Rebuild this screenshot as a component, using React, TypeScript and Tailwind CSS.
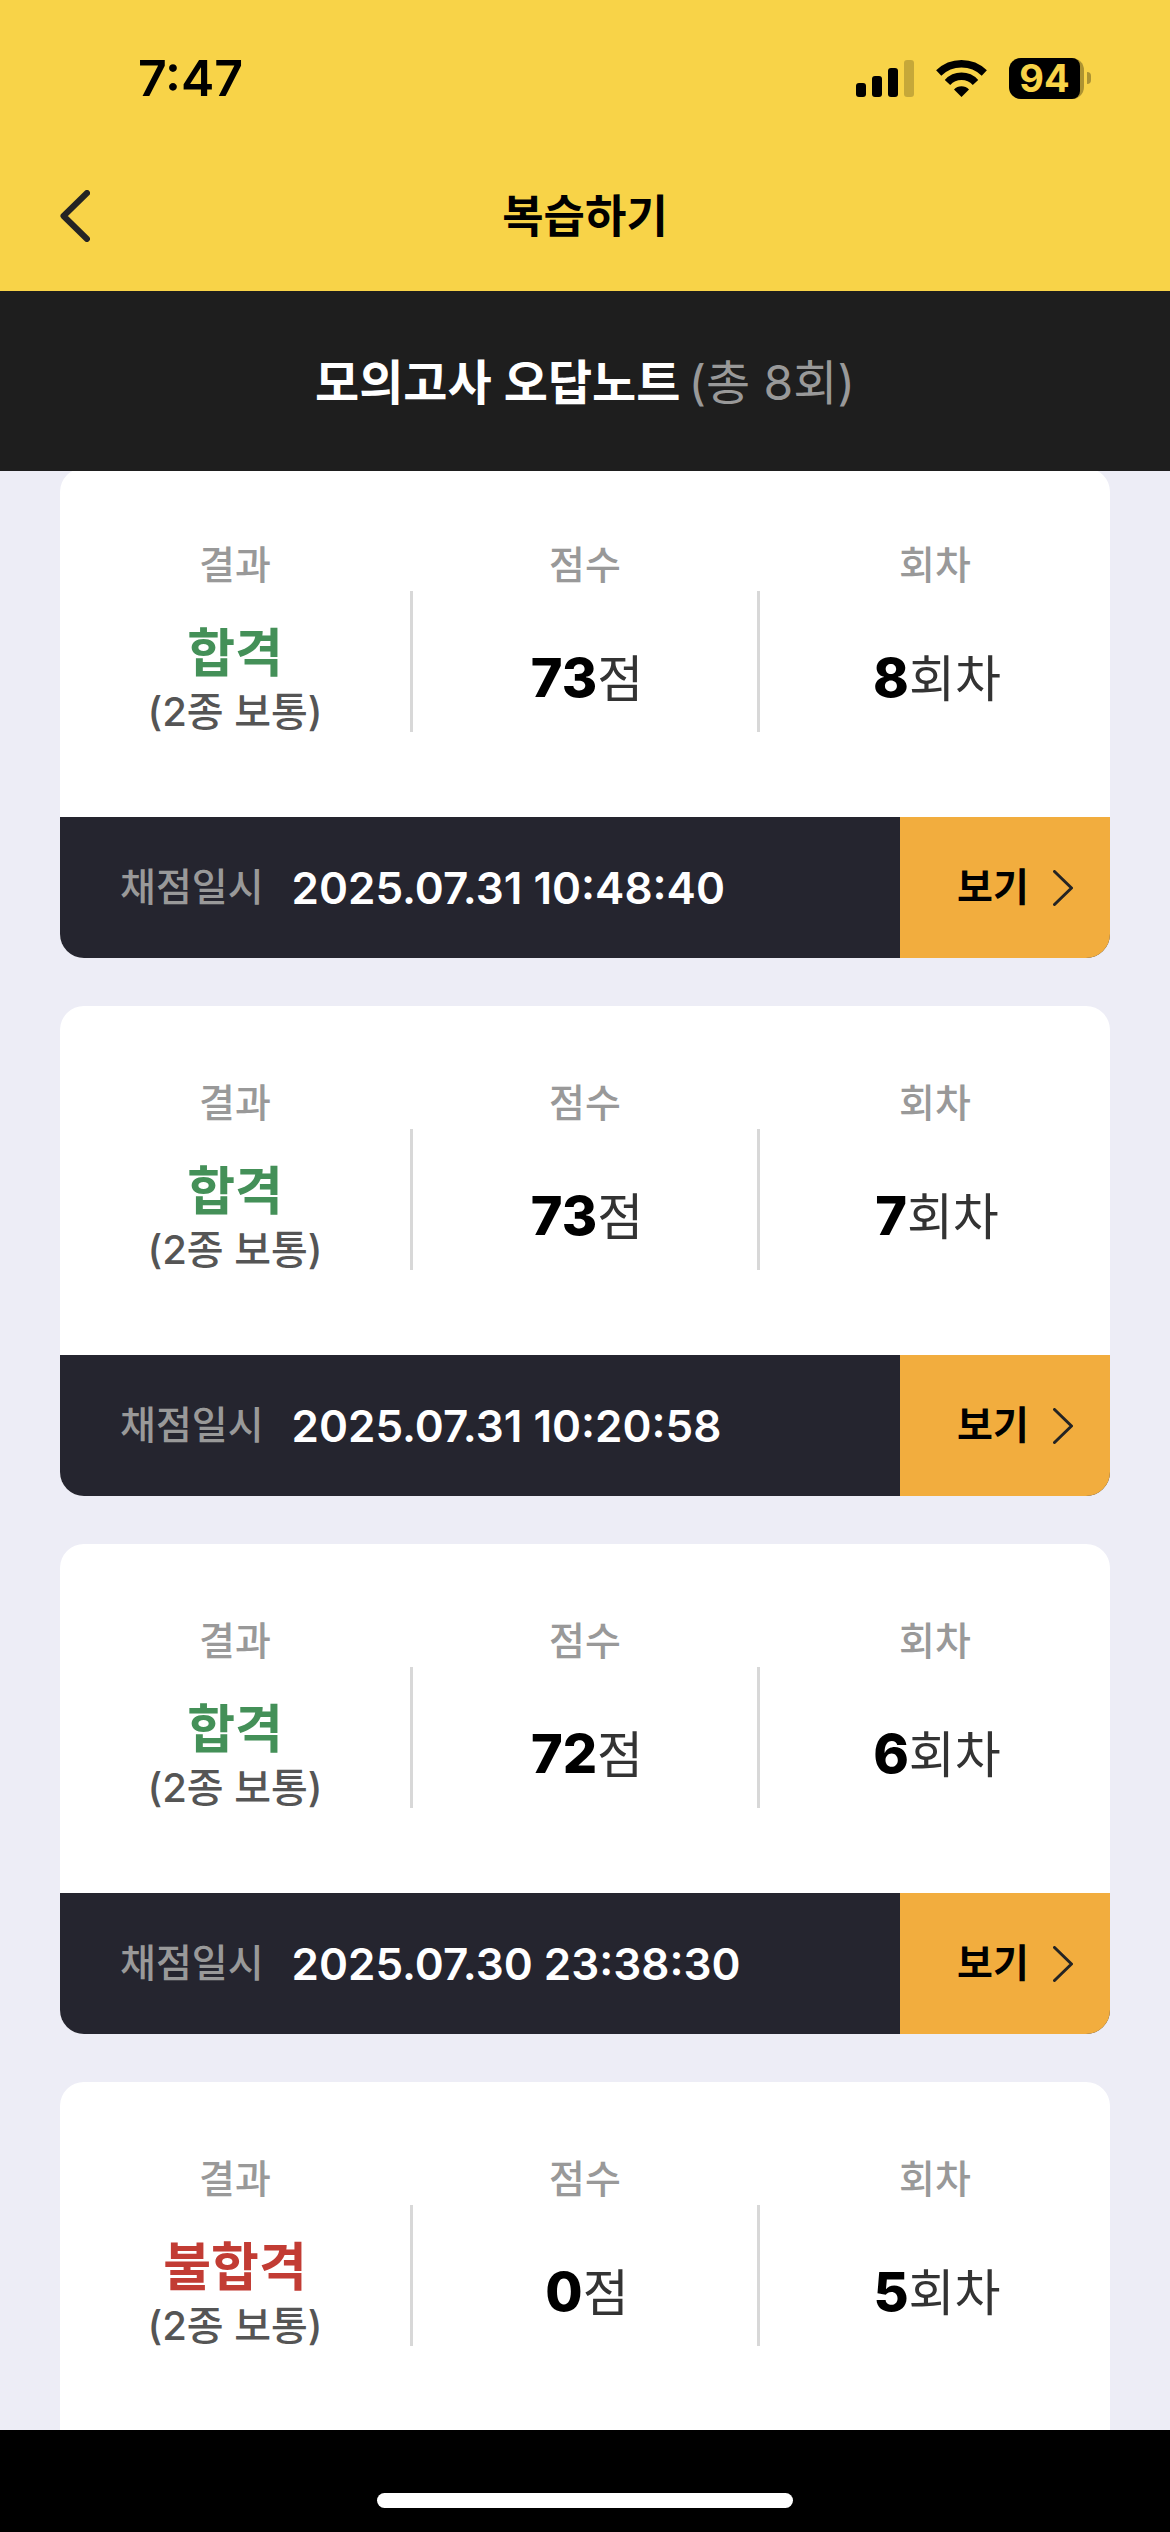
interface ExamRecord {
  round: number
  score: number
  passed: boolean
  license: string
  gradedAt?: string
}

const totalRounds = 8

const records: ExamRecord[] = [
  { round: 8, score: 73, passed: true, license: '2종 보통', gradedAt: '2025.07.31 10:48:40' },
  { round: 7, score: 73, passed: true, license: '2종 보통', gradedAt: '2025.07.31 10:20:58' },
  { round: 6, score: 72, passed: true, license: '2종 보통', gradedAt: '2025.07.30 23:38:30' },
  { round: 5, score: 0, passed: false, license: '2종 보통' },
]

function StatusBar() {
  return (
    <div className="flex items-center justify-between pt-14 pl-[138px] pr-[79px]">
      <span className="text-[50px] leading-[44px] font-semibold">7:47</span>
      <div className="flex items-center gap-[22px]">
        <svg className="w-[58px] h-[37px]" viewBox="0 0 58 37" aria-hidden="true">
          <rect x="0" y="23" width="10" height="14" rx="3" />
          <rect x="16" y="16" width="10" height="21" rx="3" />
          <rect x="32" y="8" width="10" height="29" rx="3" />
          <rect x="48" y="0" width="10" height="37" rx="3" opacity="0.2" />
        </svg>
        <svg className="w-[51px] h-[37px]" viewBox="0 0 51 37" fill="none" aria-hidden="true">
          <path d="M2.7 13A32.7 32.7 0 0 1 48.3 13" stroke="black" strokeWidth="7.4" />
          <path d="M11.5 22.4A19 19 0 0 1 39.5 22.4" stroke="black" strokeWidth="7.4" />
          <path d="M25.5 37L18 29.4A10.6 10.6 0 0 1 33 29.4Z" fill="black" />
        </svg>
        <div className="flex items-center gap-[3px]">
          <div className="flex h-[41px] w-[75px] rounded-[12px] bg-black/30">
            <span className="flex w-[71px] items-center justify-center rounded-l-[12px] rounded-r-[8px] bg-black text-[38px] leading-[41px] font-bold text-[#f8d348]">
              94
            </span>
          </div>
          <span className="h-3 w-1 rounded-r-full bg-black/30" />
        </div>
      </div>
    </div>
  )
}

function Header() {
  return (
    <header className="h-[291px] shrink-0 bg-[#f8d348]">
      <StatusBar />
      <div className="mt-[62px] grid h-[108px] grid-cols-[1fr_auto_1fr] items-center px-[60px]">
        <button type="button" aria-label="뒤로" className="justify-self-start">
          <svg className="h-[52px] w-[30px]" viewBox="0 0 30 52" fill="none" aria-hidden="true">
            <path d="M27 3L3.5 26L27 49" stroke="#242424" strokeWidth="6" strokeLinecap="round" strokeLinejoin="round" />
          </svg>
        </button>
        <h1 className="pt-0.5 text-[45px] leading-[60px] font-bold">복습하기</h1>
      </div>
    </header>
  )
}

function Cell({ label, children }: { label: string; children: React.ReactNode }) {
  return (
    <div className="flex flex-1 flex-col items-center">
      <span className="text-[39px] leading-[62px] font-medium text-[#999999]">{label}</span>
      <div className="mt-6 flex h-[120px] flex-col items-center justify-center">{children}</div>
    </div>
  )
}

function Amount({ value, unit }: { value: number; unit: string }) {
  return (
    <p className="pb-1 pl-1 text-[50px] leading-[64px] text-[#333333]">
      <strong className="text-[54px] font-extrabold text-black">{value}</strong>
      {unit}
    </p>
  )
}

function Divider() {
  return <span className="h-[141px] w-[3px] self-center bg-[#d8d8d8]" />
}

function RecordCard({ record }: { record: ExamRecord }) {
  return (
    <li className={`shrink-0 overflow-hidden bg-white ${record.gradedAt ? 'rounded-3xl' : 'rounded-t-3xl'}`}>
      <div className="grid h-[349px] grid-cols-3 pt-[66px] pb-7">
        <Cell label="결과">
          <strong className={`text-[52px] leading-[64px] font-bold ${record.passed ? 'text-[#449058]' : 'text-[#c23c34]'}`}>
            {record.passed ? '합격' : '불합격'}
          </strong>
          <span className="text-[40px] leading-[52px] font-medium text-[#555555]">({record.license})</span>
        </Cell>
        <div className="flex">
          <Divider />
          <Cell label="점수">
            <Amount value={record.score} unit="점" />
          </Cell>
          <Divider />
        </div>
        <Cell label="회차">
          <Amount value={record.round} unit="회차" />
        </Cell>
      </div>
      {record.gradedAt && (
        <div className="flex h-[141px] bg-[#25252f]">
          <div className="flex w-4/5 items-center gap-7 pl-[60px]">
            <span className="text-[39px] font-medium text-[#999999]">채점일시</span>
            <time className="text-[44px] font-semibold text-white">{record.gradedAt}</time>
          </div>
          <button type="button" className="flex w-1/5 items-center justify-center gap-6 bg-[#f2ad3e] pl-5">
            <span className="text-[39px] font-bold">보기</span>
            <svg className="h-9 w-5" viewBox="0 0 20 36" fill="none" aria-hidden="true">
              <path d="M1.5 1.5L18.5 18L1.5 34.5" stroke="#242424" strokeWidth="3" strokeLinecap="round" strokeLinejoin="round" />
            </svg>
          </button>
        </div>
      )}
    </li>
  )
}

export default function App() {
  return (
    <div className="flex h-screen flex-col bg-[#ededf6] font-['Inter','Noto_Sans_CJK_KR',sans-serif] text-black">
      <Header />
      <div className="flex h-[180px] shrink-0 items-center justify-center gap-2 bg-[#1e1e1e] pt-1 text-[48px]">
        <h2 className="font-semibold text-white">모의고사 오답노트</h2>
        <span className="text-[#999999]">(총 {totalRounds}회)</span>
      </div>
      <main className="min-h-0 flex-1 overflow-hidden px-[60px]">
        <ul className="-mt-[3px] flex flex-col gap-12">
          {records.map((record) => (
            <RecordCard key={record.round} record={record} />
          ))}
        </ul>
      </main>
      <footer className="flex h-[102px] shrink-0 items-end justify-center bg-black pb-6">
        <span className="h-[15px] w-[416px] rounded-full bg-white" />
      </footer>
    </div>
  )
}
